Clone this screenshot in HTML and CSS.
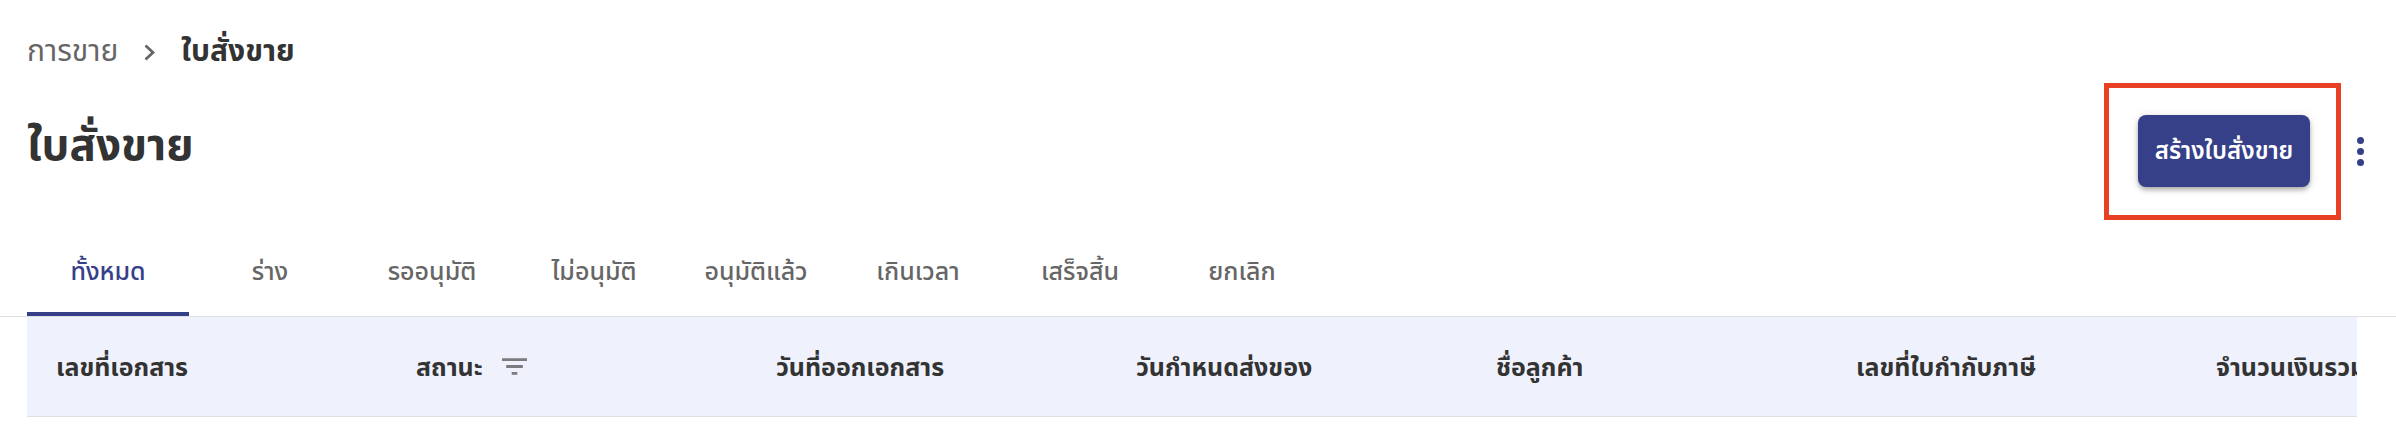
FILE: index.html
```html
<!DOCTYPE html>
<html lang="th">
<head>
  <meta charset="UTF-8">
  <meta name="viewport" content="width=device-width, initial-scale=1.0">
  <title>ใบสั่งขาย</title>
  <link rel="stylesheet" href="styles.css">
</head>
<body>
  <div class="page">
    <!-- Breadcrumb -->
    <nav class="breadcrumb">
      <span class="crumb">การขาย</span>
      <svg class="crumb-sep" viewBox="0 0 11 17" aria-hidden="true"><path d="M1.5 1.5l7.5 7-7.5 7" fill="none" stroke="#666" stroke-width="2.8"/></svg>
      <span class="crumb-current">ใบสั่งขาย</span>
    </nav>

    <!-- Title row -->
    <div class="title-row">
      <h1>ใบสั่งขาย</h1>
      <div class="actions">
        <div class="highlight">
          <button type="button" class="btn-primary">สร้างใบสั่งขาย</button>
        </div>
        <div class="more" aria-label="more"><span></span><span></span><span></span></div>
      </div>
    </div>

    <!-- Tabs -->
    <div class="tabs">
      <div class="tab active">ทั้งหมด</div>
      <div class="tab">ร่าง</div>
      <div class="tab">รออนุมัติ</div>
      <div class="tab">ไม่อนุมัติ</div>
      <div class="tab">อนุมัติแล้ว</div>
      <div class="tab">เกินเวลา</div>
      <div class="tab">เสร็จสิ้น</div>
      <div class="tab">ยกเลิก</div>
    </div>

    <!-- Table header -->
    <div class="table-wrap">
      <div class="table-head">
        <div class="th">เลขที่เอกสาร</div>
        <div class="th">สถานะ
          <svg class="filter-icon" viewBox="3 6 18 12" aria-hidden="true"><path d="M10 18h4v-2h-4v2zM3 6v2h18V6H3zm3 7h12v-2H6v2z" fill="#7b7b80"/></svg>
        </div>
        <div class="th">วันที่ออกเอกสาร</div>
        <div class="th">วันกำหนดส่งของ</div>
        <div class="th">ชื่อลูกค้า</div>
        <div class="th">เลขที่ใบกำกับภาษี</div>
        <div class="th">จำนวนเงินรวม</div>
      </div>
    </div>
  </div>
</body>
</html>
```

FILE: styles.css
```css
/* General Reset */
body, h1 {
  margin: 0;
  padding: 0;
}
body {
  background-color: #fff;
  color: #333;
  font-family: 'Noto Sans', 'Noto Sans Thai', 'DejaVu Sans', sans-serif;
  overflow: hidden;
}
.page {
  width: 2396px;
  height: 428px;
  overflow: hidden;
}
.breadcrumb {
  display: flex;
  align-items: center;
  height: 34px;
  margin: 35px 0 0 27px;
  font-size: 30px;
}
.crumb {
  color: #666;
  width: 120px;
}
.crumb-sep {
  width: 11px;
  height: 17px;
  margin-right: 26px;
  margin-left: -3px;
}
.crumb-current {
  font-weight: 700;
}
.title-row {
  display: flex;
  justify-content: space-between;
  align-items: flex-start;
  height: 137px;
  margin-top: 14px;
  padding-left: 27px;
}
h1 {
  font-size: 44px;
  font-weight: 700;
  line-height: 54px;
  margin-top: 33px;
}
.actions {
  display: flex;
  align-items: center;
  margin-right: 32px;
}
.highlight {
  border: 5px solid #e84024;
  padding: 27px 26px 28px 29px;
}
.btn-primary {
  display: block;
  width: 172px;
  height: 72px;
  padding: 0;
  color: #fff;
  font-family: inherit;
  font-size: 24px;
  font-weight: 600;
  background-color: #364089;
  border: none;
  border-radius: 8px;
  box-shadow: 0 2px 4px -1px rgba(0, 0, 0, 0.2), 0 4px 5px 0 rgba(0, 0, 0, 0.14), 0 1px 10px 0 rgba(0, 0, 0, 0.12);
}
.more {
  display: flex;
  flex-direction: column;
  gap: 4px;
  margin-left: 16px;
}
.more span {
  display: block;
  width: 7px;
  height: 7px;
  border-radius: 50%;
  background-color: #364089;
}
.tabs {
  display: flex;
  height: 96px;
  padding-left: 27px;
  border-bottom: 1px solid #e0e0e3;
}
.tab {
  box-sizing: border-box;
  display: flex;
  align-items: center;
  justify-content: center;
  width: 162px;
  height: 96px;
  padding-top: 8px;
  font-size: 25px;
  font-weight: 500;
  color: #666;
}
.tab.active {
  color: #364089;
  box-shadow: inset 0 -4px 0 #364089;
}
.table-wrap {
  width: 2330px;
  margin-left: 27px;
  overflow: hidden;
}
.table-head {
  display: flex;
  width: 2520px;
  height: 99px;
  background-color: #eff1fd;
  border-bottom: 1px solid #e0e0e3;
}
.th {
  display: flex;
  align-items: center;
  width: 360px;
  box-sizing: border-box;
  padding: 2px 0 0 29px;
  font-size: 25px;
  font-weight: 700;
  white-space: nowrap;
}
.filter-icon {
  width: 25px;
  height: 17px;
  margin-left: 19px;
  margin-top: -3px;
}
```
